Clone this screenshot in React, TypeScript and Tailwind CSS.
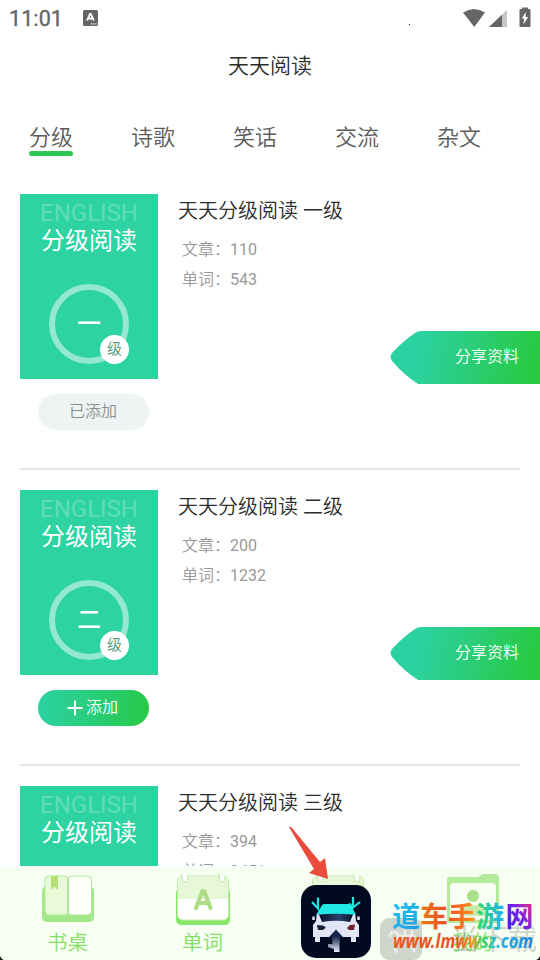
import type { ReactNode } from 'react';

type Level = {
	numeral: string;
	articles: number;
	words: number;
	added?: boolean;
};

const tabs = ['分级', '诗歌', '笑话', '交流', '杂文'];

const levels: Level[] = [
	{ numeral: '一', articles: 110, words: 543, added: true },
	{ numeral: '二', articles: 200, words: 1232 },
	{ numeral: '三', articles: 394, words: 2451 }
];

const StatusBar = () => (
	<div className="flex h-9 shrink-0 items-center pl-[9px] text-[#666]">
		<span className="w-[74px] pt-0.5 text-[21.5px] leading-9 tracking-[0.1px] [-webkit-text-stroke:0.4px_#666]">
			11:01
		</span>
		<svg className="h-4 w-[15px]" viewBox="0 0 15 16">
			<rect width="15" height="16" rx="1.5" fill="#666" />
			<path
				d="M4 10.5 7 3.8h.8l3 6.7M5.2 8.5h4.4"
				fill="none"
				stroke="#fff"
				strokeWidth="1.8"
			/>
			<path d="M8 13.8h1.2m1 0h1.2m1 0h1.2" stroke="#fff" strokeWidth="1.2" />
		</svg>
		<span className="mt-3 ml-[310.5px] size-px bg-[#222]" />
		<svg
			className="ml-[53px] h-[22px] w-[70px]"
			viewBox="0 0 70 22"
			fill="#666"
		>
			<path d="M0 5.5Q11 -1.5 22 5.5L11.3 20Z" />
			<path d="M44 3v17H26Z" fill="#c6c6c6" />
			<path d="M39 7.8V20H26Z" />
			<path d="M57.5 2H59V.5h6V2h1.500q1 0 1 1v16q0 1-1 1h-9q-1 0-1-1V3q0-1 1-1Z" />
			<path d="m62.8 5-4 6.500h2.4l-.8 6 4.700-7.500H62.500Z" fill="#fff" />
		</svg>
	</div>
);

const Cover = ({ numeral }: { numeral: string }) => (
	<div className="flex h-[185px] w-[138px] flex-col items-center bg-[#2dd3a0] pt-[5px]">
		<span className="text-[24px] leading-7 text-white/25">ENGLISH</span>
		<span className="text-[24px] leading-7 text-white">分级阅读</span>
		<div className="relative mt-[29px] flex size-20 shrink-0 items-center justify-center rounded-full border-6 border-[#94e8ce] text-white">
			<span className="pb-px text-[24px] leading-7 font-medium">
				{numeral}
			</span>
			<span className="absolute -right-1.5 -bottom-1.5 flex size-[29px] items-center justify-center rounded-full bg-white text-[15px] font-[350] text-[#4d9b76]">
				级
			</span>
		</div>
	</div>
);

const LevelRow = ({ numeral, articles, words, added }: Level) => (
	<article className="flex h-[276px] shrink-0 border-b-2 border-[#e7e7e7]">
		<div className="flex w-[138px] shrink-0 flex-col">
			<Cover numeral={numeral} />
			{added ? (
				<button className="mt-[15px] ml-[18px] h-9 w-[111px] rounded-full bg-[#eef4f4] pr-px text-[16px] font-[350] text-[#8e8e8e]">
					已添加
				</button>
			) : (
				<button className="mt-[15px] ml-[18px] flex h-9 w-[111px] items-center justify-center gap-[3px] rounded-full bg-linear-100 from-[#2dd1a4] to-[#28c940] pr-0.5 text-[16px] font-[350] text-white">
					<svg className="size-4" viewBox="0 0 16 16">
						<path d="M8 .5v15M.5 8h15" stroke="#fff" strokeWidth="2" />
					</svg>
					添加
				</button>
			)}
		</div>
		<div className="ml-5 flex w-[212px] flex-col pt-px">
			<h2 className="text-[20px] leading-8 font-[350] text-[#2c2c2c]">
				天天分级阅读 {numeral}级
			</h2>
			<div className="mt-2 ml-1 flex flex-col text-[16px] leading-[30px] font-[350] text-[#999]">
				<span>
					文章：<span className="font-normal">{articles}</span>
				</span>
				<span>
					单词：<span className="font-normal">{words}</span>
				</span>
			</div>
		</div>
		<button className="mt-[137px] -mr-5 grid h-[53px] w-[150px] shrink-0 text-[16px] text-white">
			<svg
				className="col-start-1 row-start-1 h-[53px] w-[150px]"
				viewBox="0 0 150 53"
			>
				<defs>
					<linearGradient
						id="ribbon"
						gradientUnits="userSpaceOnUse"
						x1="30"
						y1="10"
						x2="148"
						y2="36"
					>
						<stop stopColor="#2cd1a2" />
						<stop offset="1" stopColor="#28c940" />
					</linearGradient>
				</defs>
				<path
					d="M150 0H31Q28 0 25 2Q13 10 2 22Q-1 26 2 30Q14 44 28 53H150Z"
					fill="url(#ribbon)"
				/>
			</svg>
			<span className="col-start-1 row-start-1 pr-[21px] pt-px text-right leading-[50px] font-[350]">
				分享资料
			</span>
		</button>
	</article>
);

const DeskIcon = () => (
	<svg className="h-[50px] w-[54px]" viewBox="0 0 54 50">
		<rect x="1" y="12" width="52" height="36" rx="5" fill="#a2e889" />
		<rect
			x="4"
			y="2"
			width="23"
			height="39"
			rx="4"
			fill="#e8fad8"
			stroke="#b2e99c"
		/>
		<rect
			x="27"
			y="2"
			width="23.500"
			height="39"
			rx="4"
			fill="#fdfffb"
			stroke="#b2e99c"
		/>
		<path d="M27 4v38" stroke="#b2e99c" strokeWidth="2" />
		<path d="M10 2h7v14l-3.500-3.500-3.500 3.500Z" fill="#b7df78" />
	</svg>
);

const CalendarIcon = ({ letter }: { letter?: string }) => (
	<svg className="h-[53px] w-[54px]" viewBox="0 0 54 53">
		<rect y="14" width="54" height="37" rx="5" fill="#88e568" />
		<rect
			x="1.5"
			y="2"
			width="51"
			height="44"
			rx="5"
			fill="#fff"
			stroke="#c0ecad"
		/>
		<path d="M2 25V7q0-4.500 4.500-4.500h41Q52 2.500 52 7v18Z" fill="#e7f8d6" />
		<path
			d="M6 0q0 8 3.500 8 2.500 0 2.500-6M43 0q0 8 3.500 8 2.500 0 2.500-6"
			fill="#fff"
			stroke="#b9e5a6"
		/>
		{letter && (
			<path
				d="M20 34 26.500 17h1.500L34.500 34M22.500 29h10"
				fill="none"
				stroke="#addd87"
				strokeWidth="4.200"
				strokeLinecap="round"
				strokeLinejoin="round"
			/>
		)}
	</svg>
);

const ProfileIcon = () => (
	<svg className="h-[50px] w-[54px]" viewBox="0 0 54 50">
		<path
			d="M1 46V6q0-3 3-3h28l5-3h12q4 0 4 4v42q0 3-3 3H4q-3 0-3-3Z"
			fill="#b6ea9b"
		/>
		<rect x="4" y="9" width="46" height="37" rx="4" fill="#f8fff3" />
		<circle cx="27" cy="22" r="6" fill="#a8df87" />
		<path d="M14 42q1-11 13-11t13 11Z" fill="#c4ecab" />
	</svg>
);

const NavItem = ({ icon, label }: { icon: ReactNode; label: string }) => (
	<a className="flex flex-1 flex-col items-center pt-2">
		<div className="h-[54px]">{icon}</div>
		<span className="text-[20.500px] leading-[30px] font-[350] text-[#83df65]">
			{label}
		</span>
	</a>
);

const CarBadge = () => (
	<svg
		className="absolute top-[885px] left-[301px] h-[73px] w-[70px]"
		viewBox="0 0 70 73"
	>
		<defs>
			<linearGradient id="glass">
				<stop stopColor="#080f24" />
				<stop offset=".6" stopColor="#2a4070" />
				<stop offset="1" stopColor="#09122b" />
			</linearGradient>
			<linearGradient id="lift" x2="0" y2="1">
				<stop stopColor="#1c2a50" />
				<stop offset="1" stopColor="#eef3ff" />
			</linearGradient>
		</defs>
		<rect width="70" height="73" rx="15" fill="#020a22" />
		<path
			d="M16 28H54L55 36 58 40V52H55V57H50V52H40L35 46 29 52H19V57H14V52H12V40L15 36Z"
			fill="#e2e6f4"
		/>
		<path
			d="M23 19H47Q50 19 51 22L55 30Q35 28 15 30L20 22Q21 19 23 19Z"
			fill="#1fe8e5"
		/>
		<path
			d="M18 29.500Q35 28 52 29.500L49 37Q35 34.500 21 37Z"
			fill="url(#glass)"
		/>
		<path
			d="M11 17 17 23.500V12.500M52 12V22.500L59 17M52 22.500 48 18.500"
			fill="none"
			stroke="#20e6df"
			strokeWidth="2.200"
		/>
		<path
			d="M12.500 31.500v3.500m45-3.500v3.500"
			stroke="#dfe5f5"
			strokeWidth="2.500"
		/>
		<path d="M16 40 22 40.500 25 42.500 22 45H17Z" fill="#172338" />
		<path d="M54 39.500 49 40 46 43 48 45H53Z" fill="#722332" />
		<path d="M35 44.500 28 52H31V57H39V52H42Z" fill="#17234a" />
		<path d="M31.500 52H38.500V67H33V64L27 62V59H31.500Z" fill="url(#lift)" />
	</svg>
);

const SiteMark = () => (
	<svg
		className="absolute top-[895px] left-[375px] h-[65px] w-[165px] font-['Noto_Sans','Noto_Sans_CJK_SC',sans-serif]"
		viewBox="0 0 165 65"
	>
		<defs>
			<linearGradient id="mark-blue" x2="1" y2="1">
				<stop stopColor="#28c8f5" />
				<stop offset="1" stopColor="#149be6" />
			</linearGradient>
			<linearGradient id="mark-red" x2="1">
				<stop stopColor="#f07b12" />
				<stop offset="1" stopColor="#e94b25" />
			</linearGradient>
			<linearGradient id="mark-orange" x2="1">
				<stop stopColor="#f0522a" />
				<stop offset="1" stopColor="#ff9418" />
			</linearGradient>
			<linearGradient id="mark-green" x2="1">
				<stop offset=".1" stopColor="#30d669" />
				<stop offset=".9" stopColor="#21b5f0" />
			</linearGradient>
			<linearGradient id="mark-violet" x1="0" y1="1" x2="1" y2=".2">
				<stop stopColor="#3421e8" />
				<stop offset=".55" stopColor="#7124e7" />
				<stop offset="1" stopColor="#f02a80" />
			</linearGradient>
			<linearGradient
				id="mark-url"
				gradientUnits="userSpaceOnUse"
				x1="18"
				x2="158"
			>
				<stop stopColor="#e9571c" />
				<stop offset=".46" stopColor="#ee522b" />
				<stop offset=".56" stopColor="#ff9218" />
				<stop offset=".64" stopColor="#3fd45d" />
				<stop offset=".76" stopColor="#20b6e8" />
				<stop offset="1" stopColor="#2480d6" />
			</linearGradient>
		</defs>
		<rect x="5" y="23" width="42" height="42" rx="9" fill="#777" opacity=".3" />
		<path
			d="M15 41q0-4 4-4t4 4-4 4M30 36v8q0 4-4 4M25 41h14M37 36v12M22 50q-4 4 0 7M34 51q5 0 5 5"
			fill="none"
			stroke="#fff"
			strokeOpacity=".6"
			strokeWidth="2.500"
			strokeLinecap="round"
		/>
		<text x="75" y="55" fontSize="29" fill="#777" opacity=".3">
			当下载
		</text>
		<g fontSize="28" fontWeight="700">
			<text x="17" y="31.500" fill="url(#mark-blue)">
				道
			</text>
			<text x="45" y="31.500" fill="url(#mark-red)">
				车
			</text>
			<text x="73" y="31.500" fill="url(#mark-orange)">
				手
			</text>
			<text x="101" y="31.500" fill="url(#mark-green)">
				游
			</text>
			<text x="130.500" y="31.500" fill="url(#mark-violet)">
				网
			</text>
		</g>
		<text
			x="18"
			y="53"
			fontSize="19"
			fontWeight="700"
			fontStyle="italic"
			textLength="140"
			lengthAdjust="spacingAndGlyphs"
			fill="url(#mark-url)"
		>
			www.lmwwsz.com
		</text>
	</svg>
);

const App = () => (
	<div className="relative flex h-[960px] w-[540px] flex-col overflow-hidden bg-white font-[Roboto,'Noto_Sans_CJK_SC',sans-serif]">
		<StatusBar />
		<h1 className="h-[60px] shrink-0 text-center text-[21px] leading-[60px] font-[350] text-[#2c2c2c]">
			天天阅读
		</h1>
		<nav className="flex h-[98px] shrink-0 pt-[27px]">
			{tabs.map((tab, index) => (
				<a
					key={tab}
					className="flex w-[102px] flex-col items-center text-[22px] leading-[30px] font-[350] text-[#5c5c5c]"
				>
					{tab}
					{index === 0 && (
						<span className="-mt-0.5 h-[5px] w-11 rounded-full bg-[#2cc853]" />
					)}
				</a>
			))}
		</nav>
		<main className="flex min-h-0 flex-1 flex-col gap-5 overflow-hidden px-5">
			{levels.map(level => (
				<LevelRow key={level.numeral} {...level} />
			))}
		</main>
		<footer className="flex h-[94px] shrink-0 bg-[#f6fff1]">
			<NavItem icon={<DeskIcon />} label="书桌" />
			<NavItem icon={<CalendarIcon letter="A" />} label="单词" />
			<NavItem icon={<CalendarIcon />} label="阅读" />
			<NavItem icon={<ProfileIcon />} label="我的" />
		</footer>
		<svg
			className="absolute top-[826px] left-[288px] h-[54px] w-[44px]"
			viewBox="0 0 44 54"
		>
			<path
				d="M1 1Q2 0 4 2L32 36L37 32 40 53 21 47 26 43Q14 23 1 1Z"
				fill="#ea4b3d"
			/>
		</svg>
		<CarBadge />
		<SiteMark />
		<svg
			className="absolute bottom-0 left-0 h-1.5 w-[540px]"
			viewBox="0 0 540 6"
		>
			<path d="M0 2q1 3 4 4H0ZM540 2q-1 3-4 4h4Z" fill="#111" />
		</svg>
	</div>
);

export default App;
